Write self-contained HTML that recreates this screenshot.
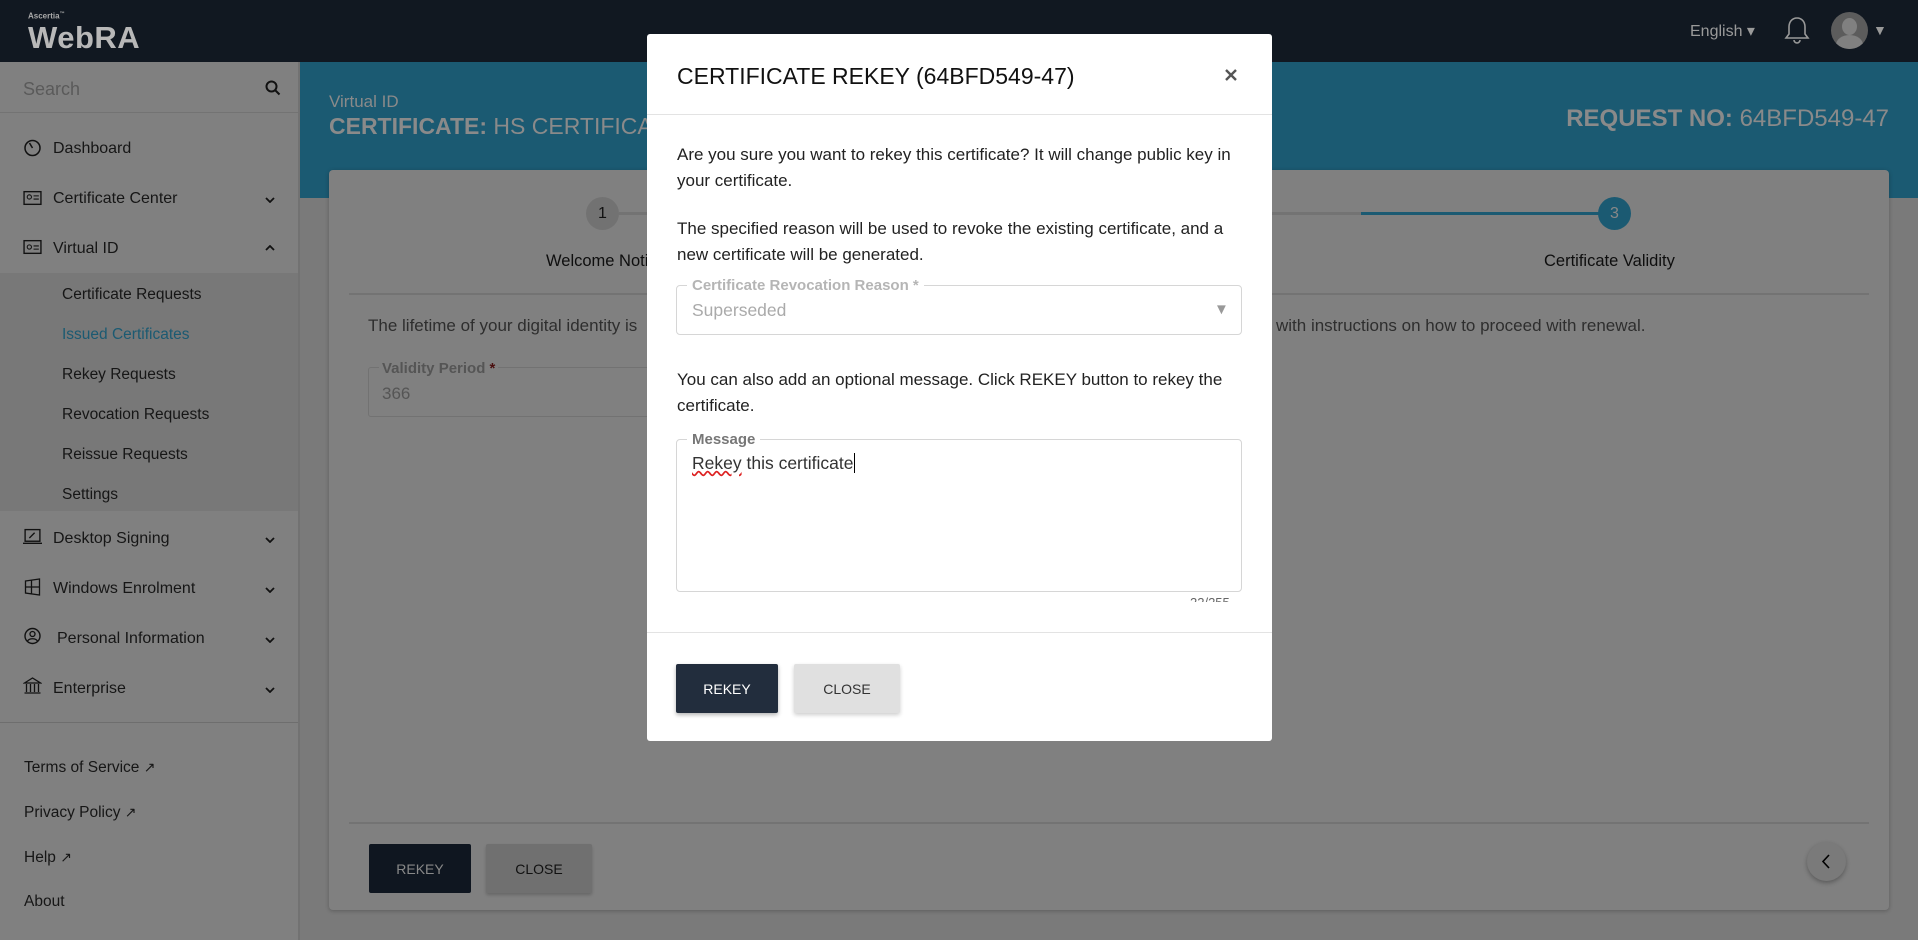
<!DOCTYPE html>
<html><head><meta charset="utf-8"><style>
*{box-sizing:border-box;margin:0;padding:0}
body{width:1918px;height:940px;overflow:hidden;font-family:"Liberation Sans",sans-serif;background:#7a7a7a;position:relative;color:#111}
.a{position:absolute}
.top{left:0;top:0;width:1918px;height:62px;background:#111821}
.side{left:0;top:62px;width:300px;height:878px;background:#808080;border-right:2px solid #727272}
.si{position:absolute;left:53px;font-size:16px;color:#161616;white-space:nowrap}
.sub{position:absolute;left:62px;font-size:15.5px;color:#161616}
.ic{position:absolute;left:23px;width:19px;height:18px}
.chev{position:absolute;left:265px;width:10px;height:6px}
.hdr{left:300px;top:62px;width:1618px;height:136px;background:#1b5a72}
.card{left:329px;top:170px;width:1560px;height:740px;background:#808080;border-radius:4px;box-shadow:0 1px 4px rgba(0,0,0,.25)}
.modal{left:647px;top:34px;width:625px;height:707px;background:#fff;border-radius:3px}
.mt{font-size:17px;color:#222;line-height:26px}
</style></head><body>
<div class="a top">
  <div class="a" style="left:28px;top:11px;font-size:8px;color:#aaa;font-weight:bold">Ascertia<sup style="font-size:5px">™</sup></div>
  <div class="a" style="left:28px;top:20px;font-size:31px;color:#b8b8b8;font-weight:bold;letter-spacing:0.5px">WebRA</div>
  <div class="a" style="left:1690px;top:21px;font-size:16px;color:#9a9a9a">English ▾</div>
  <svg class="a" style="left:1783px;top:15px" width="28" height="30" viewBox="0 0 28 30"><path d="M14 3c-5 0-8 4-8 9v7l-3 4h22l-3-4v-7c0-5-3-9-8-9zM11 25a3 3 0 0 0 6 0" fill="none" stroke="#999" stroke-width="1.6"/></svg>
  <div class="a" style="left:1831px;top:12px;width:37px;height:37px;border-radius:50%;background:#5c5c5c;overflow:hidden"><div class="a" style="left:11px;top:6px;width:15px;height:17px;border-radius:50%;background:#808080"></div><div class="a" style="left:5px;top:23px;width:27px;height:20px;border-radius:50%;background:#808080"></div></div>
  <div class="a" style="left:1873px;top:22px;font-size:14px;color:#999">▼</div>
</div>
<div class="a side">
  <div class="a" style="left:0;top:0;width:298px;height:51px;border-bottom:1px solid #737373"></div>
  <div class="a" style="left:23px;top:17px;font-size:18px;color:#5a5a5a">Search</div>
  <svg class="a" style="left:265px;top:18px" width="16" height="16" viewBox="0 0 16 16"><circle cx="6.5" cy="6.5" r="5" fill="none" stroke="#111" stroke-width="2"/><path d="M10 10l4.5 4.5" stroke="#111" stroke-width="2"/></svg>
  <svg class="ic" style="top:77px" viewBox="0 0 18 18"><circle cx="9" cy="9" r="7.5" fill="none" stroke="#111" stroke-width="1.5"/><path d="M9 9L6 4" stroke="#111" stroke-width="1.5"/></svg>
  <div class="si" style="top:78px">Dashboard</div>
  <svg class="ic" style="top:127px" viewBox="0 0 18 16"><rect x="1" y="2" width="16" height="12" fill="none" stroke="#111" stroke-width="1.3"/><circle cx="6" cy="7" r="2" fill="none" stroke="#111"/><path d="M10 6h5M10 9h5" stroke="#111"/></svg>
  <div class="si" style="top:128px">Certificate Center</div>
  <svg class="chev" style="top:135px" viewBox="0 0 10 6"><path d="M1 1l4 4 4-4" fill="none" stroke="#111" stroke-width="1.8"/></svg>
  <svg class="ic" style="top:176px" viewBox="0 0 18 16"><rect x="1" y="2" width="16" height="12" fill="none" stroke="#111" stroke-width="1.3"/><circle cx="6" cy="8" r="2" fill="none" stroke="#111"/><path d="M10 7h5M10 10h5" stroke="#111"/></svg>
  <div class="si" style="top:178px">Virtual ID</div>
  <svg class="chev" style="top:183px" viewBox="0 0 10 6"><path d="M1 5l4-4 4 4" fill="none" stroke="#111" stroke-width="1.8"/></svg>
  <div class="a" style="left:0;top:211px;width:298px;height:238px;background:#787878"></div>
  <div class="sub" style="top:224px">Certificate Requests</div>
  <div class="sub" style="top:264px;color:#1b5a72">Issued Certificates</div>
  <div class="sub" style="top:304px">Rekey Requests</div>
  <div class="sub" style="top:344px">Revocation Requests</div>
  <div class="sub" style="top:384px">Reissue Requests</div>
  <div class="sub" style="top:424px">Settings</div>
  <svg class="ic" style="top:466px" viewBox="0 0 18 16"><rect x="2" y="1" width="14" height="11" fill="none" stroke="#111" stroke-width="1.3"/><path d="M0 14h18M6 9l5-5" stroke="#111" stroke-width="1.3"/></svg>
  <div class="si" style="top:468px">Desktop Signing</div>
  <svg class="chev" style="top:475px" viewBox="0 0 10 6"><path d="M1 1l4 4 4-4" fill="none" stroke="#111" stroke-width="1.8"/></svg>
  <svg class="ic" style="top:516px" viewBox="0 0 18 18"><path d="M2 3l14-2v16L2 15zM2 9h14M8 2v14" fill="none" stroke="#111" stroke-width="1.3"/></svg>
  <div class="si" style="top:518px">Windows Enrolment</div>
  <svg class="chev" style="top:525px" viewBox="0 0 10 6"><path d="M1 1l4 4 4-4" fill="none" stroke="#111" stroke-width="1.8"/></svg>
  <svg class="ic" style="top:565px" viewBox="0 0 18 18"><circle cx="9" cy="9" r="7.5" fill="none" stroke="#111" stroke-width="1.4"/><circle cx="9" cy="7" r="2.5" fill="none" stroke="#111" stroke-width="1.3"/><path d="M4 14c2-3 8-3 10 0" fill="none" stroke="#111" stroke-width="1.3"/></svg>
  <div class="si" style="top:568px;left:57px">Personal Information</div>
  <svg class="chev" style="top:575px" viewBox="0 0 10 6"><path d="M1 1l4 4 4-4" fill="none" stroke="#111" stroke-width="1.8"/></svg>
  <svg class="ic" style="top:615px" viewBox="0 0 18 18"><path d="M1 6L9 1l8 5zM3 7v8M7 7v8M11 7v8M15 7v8M1 16h16" fill="none" stroke="#111" stroke-width="1.3"/></svg>
  <div class="si" style="top:618px">Enterprise</div>
  <svg class="chev" style="top:625px" viewBox="0 0 10 6"><path d="M1 1l4 4 4-4" fill="none" stroke="#111" stroke-width="1.8"/></svg>
  <div class="a" style="left:0;top:660px;width:298px;height:1px;background:#6e6e6e"></div>
  <div class="si" style="left:24px;top:697px;font-size:15.5px">Terms of Service <span style="font-size:14px">↗</span></div>
  <div class="si" style="left:24px;top:742px;font-size:15.5px">Privacy Policy <span style="font-size:14px">↗</span></div>
  <div class="si" style="left:24px;top:787px;font-size:15.5px">Help <span style="font-size:14px">↗</span></div>
  <div class="si" style="left:24px;top:831px;font-size:15.5px">About</div>
</div>
<div class="a hdr">
  <div class="a" style="left:29px;top:30px;font-size:17px;color:#8a8a8a">Virtual ID</div>
  <div class="a" style="left:29px;top:51px;font-size:23px;color:#8a8a8a;white-space:nowrap"><b>CERTIFICATE:</b> HS CERTIFICATE</div>
  <div class="a" style="right:29px;top:43px;font-size:24px;color:#8a8a8a;white-space:nowrap"><b>REQUEST NO:</b> 64BFD549-47</div>
</div>
<div class="a card">
  <div class="a" style="left:290px;top:42px;width:1000px;height:3px;background:#737373"></div>
  <div class="a" style="left:1032px;top:42px;width:255px;height:3px;background:#1b5a72"></div>
  <div class="a" style="left:257px;top:27px;width:33px;height:33px;border-radius:50%;background:#727272;color:#111;font-size:16px;text-align:center;line-height:33px">1</div>
  <div class="a" style="left:1269px;top:27px;width:33px;height:33px;border-radius:50%;background:#1b5a72;color:#888;font-size:16px;text-align:center;line-height:33px">3</div>
  <div class="a" style="left:217px;top:82px;font-size:16.5px;color:#0e0e0e">Welcome Notice</div>
  <div class="a" style="left:1215px;top:82px;font-size:16.5px;color:#0e0e0e">Certificate Validity</div>
  <div class="a" style="left:20px;top:123px;width:1520px;height:2px;background:#737373"></div>
  <div class="a" style="left:39px;top:146px;font-size:17px;color:#2e2e2e;white-space:nowrap">The lifetime of your digital identity is</div>
  <div class="a" style="left:947px;top:146px;font-size:17px;color:#2e2e2e;white-space:nowrap">with instructions on how to proceed with renewal.</div>
  <div class="a" style="left:39px;top:197px;width:320px;height:50px;border:1px solid #727272;border-radius:3px"></div>
  <div class="a" style="left:50px;top:190px;font-size:15px;color:#555;font-weight:bold;background:#808080;padding:0 3px">Validity Period <span style="color:#4a0f0f">*</span></div>
  <div class="a" style="left:53px;top:214px;font-size:17px;color:#555">366</div>
  <div class="a" style="left:20px;top:652px;width:1520px;height:2px;background:#737373"></div>
  <div class="a" style="left:40px;top:674px;width:102px;height:49px;background:#0f1620;border-radius:2px;color:#888;font-size:14px;text-align:center;line-height:51px">REKEY</div>
  <div class="a" style="left:157px;top:674px;width:106px;height:49px;background:#707070;border-radius:2px;color:#111;font-size:14px;text-align:center;line-height:51px;box-shadow:0 2px 3px rgba(0,0,0,.2)">CLOSE</div>
  <div class="a" style="left:1478px;top:672px;width:39px;height:39px;border-radius:50%;background:#7a7a7a;box-shadow:0 2px 5px rgba(0,0,0,.3)"><svg class="a" style="left:13px;top:11px" width="12" height="17" viewBox="0 0 12 17"><path d="M9 2L3 8.5 9 15" fill="none" stroke="#000" stroke-width="1.6"/></svg></div>
</div>
<div class="a modal">
  <div class="a" style="left:30px;top:29px;font-size:23px;color:#111;white-space:nowrap">CERTIFICATE REKEY (64BFD549-47)</div>
  <svg class="a" style="left:577px;top:34px" width="14" height="14" viewBox="0 0 14 14"><path d="M2 2l10 10M12 2L2 12" stroke="#555" stroke-width="2.4"/></svg>
  <div class="a" style="left:0;top:80px;width:625px;height:1px;background:#e3e3e3"></div>
  <div class="a mt" style="left:30px;top:108px;width:570px">Are you sure you want to rekey this certificate? It will change public key in your certificate.</div>
  <div class="a mt" style="left:30px;top:182px;width:575px">The specified reason will be used to revoke the existing certificate, and a new certificate will be generated.</div>
  <div class="a" style="left:29px;top:251px;width:566px;height:50px;border:1px solid #d6d6d6;border-radius:4px"></div>
  <div class="a" style="left:40px;top:243px;font-size:15px;font-weight:bold;color:#b5b5b5;background:#fff;padding:0 5px">Certificate Revocation Reason *</div>
  <div class="a" style="left:45px;top:266px;font-size:17.5px;color:#aaa">Superseded</div>
  <div class="a" style="left:567px;top:267px;font-size:15px;color:#999">▼</div>
  <div class="a mt" style="left:30px;top:333px;width:570px">You can also add an optional message. Click REKEY button to rekey the certificate.</div>
  <div class="a" style="left:29px;top:405px;width:566px;height:153px;border:1px solid #d6d6d6;border-radius:4px"></div>
  <div class="a" style="left:40px;top:397px;font-size:15px;font-weight:bold;color:#777;background:#fff;padding:0 5px">Message</div>
  <div class="a" style="left:45px;top:419px;font-size:17.5px;color:#333"><span style="text-decoration:underline wavy #d22">Rekey</span> this certificate<span style="border-left:1px solid #000;margin-left:1px"></span></div>
  <div class="a" style="left:543px;top:562px;width:60px;height:6px;overflow:hidden"><div style="font-size:13px;color:#666;margin-top:-1px">22/255</div></div>
  <div class="a" style="left:0;top:598px;width:625px;height:1px;background:#e3e3e3"></div>
  <div class="a" style="left:29px;top:630px;width:102px;height:49px;background:#222d3d;border-radius:2px;color:#fff;font-size:14px;text-align:center;line-height:51px;box-shadow:0 2px 4px rgba(0,0,0,.3)">REKEY</div>
  <div class="a" style="left:147px;top:630px;width:106px;height:49px;background:#e0e0e0;border-radius:2px;color:#333;font-size:14px;text-align:center;line-height:51px;box-shadow:0 2px 4px rgba(0,0,0,.2)">CLOSE</div>
</div>
</body></html>
